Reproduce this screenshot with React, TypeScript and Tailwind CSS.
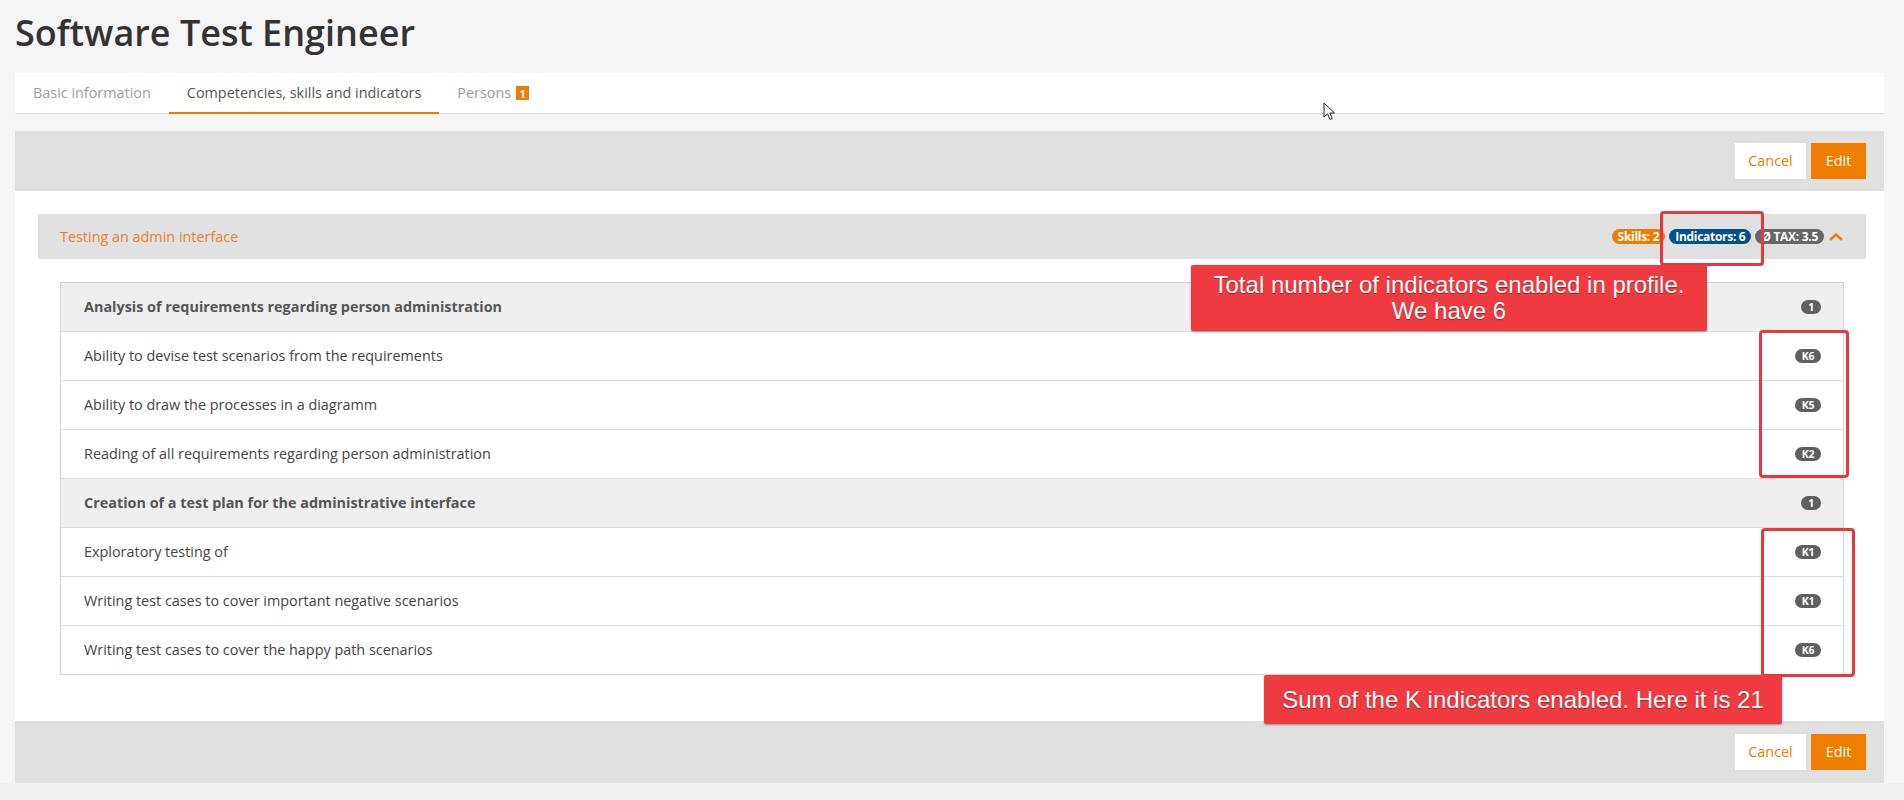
import React from 'react';

interface Indicator {
  label: string;
  badge: string;
}

interface Skill {
  title: string;
  count: string;
  indicators: Indicator[];
}

const skills: Skill[] = [
  {
    title: 'Analysis of requirements regarding person administration',
    count: '1',
    indicators: [
      { label: 'Ability to devise test scenarios from the requirements', badge: 'K6' },
      { label: 'Ability to draw the processes in a diagramm', badge: 'K5' },
      { label: 'Reading of all requirements regarding person administration', badge: 'K2' },
    ],
  },
  {
    title: 'Creation of a test plan for the administrative interface',
    count: '1',
    indicators: [
      { label: 'Exploratory testing of', badge: 'K1' },
      { label: 'Writing test cases to cover important negative scenarios', badge: 'K1' },
      { label: 'Writing test cases to cover the happy path scenarios', badge: 'K6' },
    ],
  },
];

function Pill({ children, className = '' }: { children: React.ReactNode; className?: string }) {
  return (
    <span
      className={`inline-flex h-[15px] items-center justify-center rounded-full px-[6px] text-[12px] font-bold leading-none tracking-[-0.3px] text-white ${className}`}
    >
      {children}
    </span>
  );
}

function Toolbar({ className = '' }: { className?: string }) {
  return (
    <div className={`flex items-center justify-end gap-[5px] bg-[#e0e0e0] pr-[18px] ${className}`}>
      <button className="h-[36px] w-[71px] bg-white text-[14.4px] text-[#ef7d00]">Cancel</button>
      <button className="h-[36px] w-[55px] bg-[#ef7d00] text-[14.4px] text-white">Edit</button>
    </div>
  );
}

function Row({ label, badge, header }: { label: string; badge: string; header?: boolean }) {
  return (
    <div
      className={`flex h-[49px] items-center justify-between border-t border-[#dcdcdc] pl-[23px] pr-[22px] first:h-[48px] first:border-t-0 ${
        header ? 'bg-[#efefef] font-bold text-[#555]' : 'bg-white text-[#444]'
      }`}
    >
      <span className="text-[14.4px]">{label}</span>
      <span
        className={`inline-flex h-[14px] items-center justify-center rounded-full bg-[#5f5f5f] text-[10.5px] font-bold leading-none tracking-[-0.3px] text-white ${
          header ? 'w-[20px]' : 'w-[26px]'
        }`}
      >
        {badge}
      </span>
    </div>
  );
}

export default function App() {
  return (
    <div className="relative min-h-screen bg-[#f0f0f0] font-['Open_Sans',sans-serif]">
      <div className="bg-[#f5f5f5] pl-[15px] pr-[20px]">
        <h1 className="pt-[11px] text-[36px] font-semibold leading-[43px] text-[#333]">
          Software Test Engineer
        </h1>

        {/* tabs */}
        <div className="mt-[19px] flex h-[41px] border-b border-[#dedede] bg-white text-[14.4px]">
          <div className="flex items-center px-[18px] text-[#9d9d9d]">Basic information</div>
          <div className="-mb-px flex items-center border-b-2 border-[#ef7d00] px-[18px] text-[#555]">
            Competencies, skills and indicators
          </div>
          <div className="flex items-center px-[18px] text-[#9d9d9d]">
            Persons
            <span className="ml-[5px] inline-flex h-[14px] w-[13px] items-center justify-center bg-[#ef7d00] text-[11px] font-bold leading-none text-white">
              1
            </span>
          </div>
        </div>

        <Toolbar className="mt-[17px] h-[60px]" />

        <div className="bg-white pb-[23px] pl-[23px] pr-[18px] pt-[23px]">
          <div className="flex h-[45px] items-center justify-between bg-[#e0e0e0] pl-[22px] pr-[22px]">
            <span className="text-[14.4px] text-[#ef8126]">Testing an admin interface</span>
            <div className="flex items-center gap-[4px]">
              <Pill className="bg-[#ef7d00]">Skills: 2</Pill>
              <Pill className="bg-[#03508a]">Indicators: 6</Pill>
              <Pill className="bg-[#666]">Ø TAX: 3.5</Pill>
              <svg width="16" height="10" viewBox="0 0 16 10">
                <path d="M2 8 L8 2.5 L14 8" fill="none" stroke="#ef7d00" strokeWidth="2.4" />
              </svg>
            </div>
          </div>

          <div className="px-[22px] pb-[23px] pt-[23px]">
            <div className="border border-[#d4d4d4]">
              {skills.map((s) => (
                <React.Fragment key={s.title}>
                  <Row label={s.title} badge={s.count} header />
                  {s.indicators.map((i) => (
                    <Row key={i.label} label={i.label} badge={i.badge} />
                  ))}
                </React.Fragment>
              ))}
            </div>
          </div>
        </div>

        <Toolbar className="h-[62px]" />
      </div>

      {/* annotations */}
      <div className="absolute left-[1660px] top-[211px] h-[55px] w-[104px] rounded-[4px] border-[3px] border-[#e8383d]" />
      <div className="absolute left-[1191px] top-[265px] flex h-[66px] w-[516px] items-center justify-center rounded-[2px] bg-[#ef3b3f] text-center font-['Liberation_Sans',Arial,sans-serif] text-[24px] leading-[26px] text-white shadow-[0_1px_2px_rgba(0,0,0,0.35)] [text-shadow:0_1px_1px_rgba(0,0,0,0.35)]">
        Total number of indicators enabled in profile.
        <br />
        We have 6
      </div>
      <div className="absolute left-[1759px] top-[330px] h-[148px] w-[90px] rounded-[4px] border-[3px] border-[#e8383d]" />
      <div className="absolute left-[1761px] top-[528px] h-[149px] w-[94px] rounded-[4px] border-[3px] border-[#e8383d]" />
      <div className="absolute left-[1264px] top-[675px] flex h-[49px] w-[518px] items-center justify-center rounded-[2px] bg-[#ef3b3f] font-['Liberation_Sans',Arial,sans-serif] text-[24px] text-white shadow-[0_1px_2px_rgba(0,0,0,0.35)] [text-shadow:0_1px_1px_rgba(0,0,0,0.35)]">
        Sum of the K indicators enabled. Here it is 21
      </div>

      {/* mouse pointer */}
      <svg className="absolute left-[1323px] top-[102px]" width="13" height="20" viewBox="0 0 13 20">
        <path d="M1 1 L1 15 L4.5 11.8 L7 17.5 L9.2 16.5 L6.8 11 L11.5 11 Z" fill="#fff" stroke="#222" strokeWidth="1" strokeLinejoin="round" />
      </svg>
    </div>
  );
}
